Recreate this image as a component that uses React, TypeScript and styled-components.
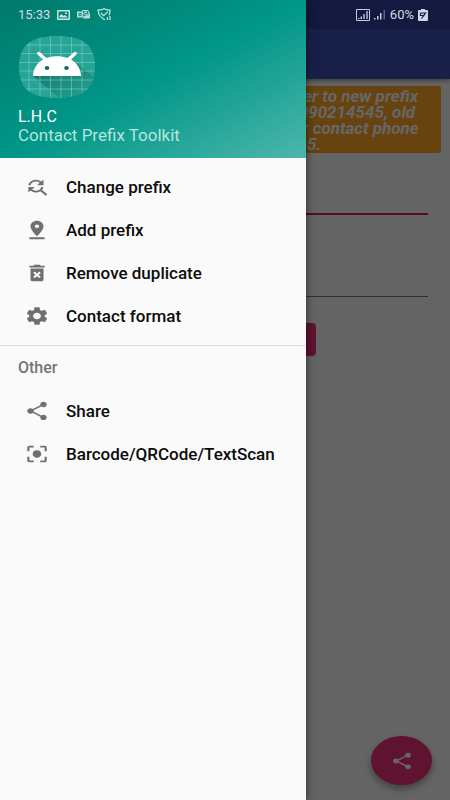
import React from "react";
import styled, { createGlobalStyle } from "styled-components";
import {
  MdCenterFocusStrong,
  MdDeleteForever,
  MdFindReplace,
  MdPinDrop,
  MdSettings,
  MdShare,
} from "react-icons/md";

const GlobalStyle = createGlobalStyle`
  *, *::before, *::after { box-sizing: border-box; }
  body {
    margin: 0;
    background: #fafafa;
    font-family: Roboto, "Liberation Sans", sans-serif;
  }
`;

const Screen = styled.div`
  position: relative;
  min-height: 100vh;
  overflow: hidden;
`;

const AppBar = styled.header`
  height: 79px;
  padding-top: 29px;
  background: linear-gradient(#303f9f 29px, #3f51b5 29px);
  box-shadow: 0 2px 4px rgba(0, 0, 0, 0.35);
`;

const Content = styled.main`
  display: flex;
  flex-direction: column;
  padding: 7px 9px;
`;

const Banner = styled.p`
  margin: 0;
  padding: 2px 8px;
  height: 67px;
  border-radius: 2px;
  background: #ffa726;
  color: #fff;
  font-size: 17px;
  line-height: 16px;
  font-weight: 700;
  font-style: italic;
  text-align: center;
  white-space: nowrap;
`;

const BannerLine = styled.span`
  display: block;
`;

const Field = styled.input<{ $active?: boolean }>`
  display: block;
  height: 36px;
  margin: ${(p) => (p.$active ? "26px" : "46px")} 13px 0;
  border: 0;
  border-bottom: ${(p) => (p.$active ? "2px solid #d81b60" : "1px solid #777")};
  border-radius: 0;
  background: transparent;
  font: inherit;
  outline: none;
`;

const SubmitButton = styled.button`
  align-self: center;
  width: 182px;
  height: 33px;
  margin-top: 26px;
  border: 0;
  border-radius: 4px;
  background: #ec3078;
`;

const Fab = styled.button`
  position: absolute;
  right: 18px;
  bottom: 15px;
  width: 61px;
  height: 49px;
  padding: 0;
  display: grid;
  place-items: center;
  border: 0;
  border-radius: 50%;
  background: #ec3078;
  color: #fff;
  box-shadow: 0 4px 7px rgba(0, 0, 0, 0.35);

  svg {
    width: 24px;
    height: 20px;
  }
`;

const Scrim = styled.div`
  position: absolute;
  inset: 0;
  background: rgba(0, 0, 0, 0.6);
`;

const Drawer = styled.aside`
  position: absolute;
  top: 0;
  bottom: 0;
  left: 0;
  width: 68%;
  background: #fafafa;
  box-shadow: 0 0 8px rgba(0, 0, 0, 0.6);
`;

const DrawerHeader = styled.div`
  display: flex;
  flex-direction: column;
  height: 158px;
  padding: 36px 18px 0;
  background: linear-gradient(to bottom right, #00796b, #009688 50%, #4db6ac);
  color: #fff;
`;

const Logo = styled.svg`
  width: 77px;
  height: 62px;
`;

const AppOwner = styled.div`
  margin-top: 9px;
  font-size: 16px;
  line-height: 19px;
`;

const AppName = styled.div`
  font-size: 17px;
  line-height: 19px;
  color: #b3e5df;
  white-space: nowrap;
`;

const Menu = styled.ul`
  margin: 0;
  padding: 0;
  list-style: none;
`;

const MainMenu = styled(Menu)`
  padding: 7px 0 8px;
  border-bottom: 1px solid #dedede;
`;

const MenuLink = styled.a`
  display: flex;
  align-items: center;
  gap: 16px;
  height: 43px;
  padding: 0 24px;
  color: #0c0c0c;
  font-size: 17px;
  line-height: 20px;
  font-weight: 500;
  text-decoration: none;
  white-space: nowrap;

  svg {
    flex: none;
    width: 26px;
    height: 22px;
    color: #707070;
  }
`;

const GroupTitle = styled.h2`
  display: flex;
  align-items: center;
  height: 43px;
  margin: 0;
  padding: 0 18px;
  color: #757575;
  font-size: 16px;
  line-height: 20px;
  font-weight: 500;
`;

const StatusBar = styled.div`
  position: absolute;
  top: 0;
  left: 0;
  right: 0;
  display: flex;
  justify-content: space-between;
  align-items: center;
  height: 29px;
  padding: 0 22px 0 18px;
  color: #d5d9e4;
  font-size: 13px;
  line-height: 16px;
`;

const StatusGroup = styled.div`
  display: flex;
  align-items: center;
  gap: 7px;
`;

const SignalGroup = styled(StatusGroup)`
  gap: 4px;
`;

const PictureIcon = () => (
  <svg width="13" height="10" viewBox="0 0 13 10">
    <path fill="#c5e8e2" fillRule="evenodd" d="M1 0h11q1 0 1 1v8q0 1-1 1H1q-1 0-1-1V1q0-1 1-1zM1.500 1.500v7h10v-7zM2.500 7.500V6l2-2 2 2 1.500-1 2.500 2v.5zM8 2.500h2v1.500H8z" />
  </svg>
);

const MailIcon = () => (
  <svg width="13" height="11" viewBox="0 0 13 11">
    <path fill="#b5ddd6" fillRule="evenodd" d="M0 2.500h6v6H0zM3 3.800a1.700 1.700 0 1 0 .01 0zM3 4.800a.7.7 0 1 1-.01 0z" />
    <path fill="none" stroke="#b5ddd6" d="M5 1.500h6l1 2.500-3 2-3-1.500M12.500 4v5H6" />
    <path fill="#b5ddd6" d="M7 2.500h3v1.500H7zM6.500 7l2.500-.5L12 5.500V9H6.500z" />
  </svg>
);

const ShieldIcon = () => (
  <svg width="15" height="13" viewBox="0 0 15 13" fill="none" stroke="#c5e8e2" strokeWidth="1.200">
    <path d="M8 11.800C4 10 1.500 7 1 2.200 3.500 2.200 5 1.600 7 .7c2 .9 3.500 1.500 6 1.500 0 2-.3 3.500-1 5" />
    <path d="M4 5l2.600 2.600L11 3.600M10.500 9v3M13 8v4" />
  </svg>
);

const BoxedSignalIcon = () => (
  <svg width="14" height="12" viewBox="0 0 14 12">
    <path fill="none" stroke="#c7cbdc" d="M.5.5h13v11H.5z" />
    <path fill="#c7cbdc" d="M2 9h1.500v1H2zM4.500 7.500H6V10H4.500z" />
    <path fill="#8c90b0" d="M7 5h2v5H7zM10 2h2v8h-2z" />
  </svg>
);

const SignalIcon = () => (
  <svg width="12" height="11" viewBox="0 0 12 11">
    <path fill="#c7cbdc" d="M0 9h1.500v1.500H0zM3 7h1.500v3.500H3zM6 4h1.500v6.500H6z" />
    <path fill="#5e638c" d="M9.500 1H11v9.500H9.500z" />
  </svg>
);

const BatteryIcon = () => (
  <svg width="10" height="12" viewBox="0 0 10 12">
    <path fill="#d0d3e2" d="M3 0h4v1h2q1 0 1 1v9q0 1-1 1H1q-1 0-1-1V2q0-1 1-1h2z" />
    <path fill="none" stroke="#141942" strokeWidth="1.200" d="M2.500 4h5L3.500 9.500M2.500 4v2.500h4" />
  </svg>
);

const gridX = [11, 22, 32.5, 43, 53.5, 64];
const gridY = [9, 17.5, 26.5, 35, 44, 53];

const AndroidLogo = () => (
  <Logo viewBox="0 0 77 62" role="img" aria-label="Android logo">
    <defs>
      <clipPath id="logo-shape">
        <path d="M39 0C64 0 77 8 77 31S64 62 39 62 1 54 1 31 14 0 39 0z" />
      </clipPath>
      <linearGradient id="logo-shadow" x1="0" y1="0" x2="1" y2="1">
        <stop offset="0" stopColor="#0b6355" stopOpacity="0.9" />
        <stop offset="1" stopColor="#168a7b" stopOpacity="0.2" />
      </linearGradient>
    </defs>
    <g clipPath="url(#logo-shape)">
      <path fill="#26a596" d="M0 0h77v62H0z" />
      <path fill="url(#logo-shadow)" d="M15 40L42 62H77V42L58 27 62 40z" />
      <path stroke="#84cfc5" strokeOpacity="0.75" strokeWidth="0.8" d={gridX.map((x) => `M${x} 0v62`).join("") + gridY.map((y) => `M0 ${y}h77`).join("")} />
    </g>
    <path fill="#fff" d="M15 40C15 33 19 27 25 23.500L19.500 18.500a1.600 1.600 0 0 1 2.400-2.200L28.500 22C35 19.500 43 19.500 49.500 22L56 16.300a1.600 1.600 0 0 1 2.400 2.200L53 23.500C59 27 63 33 63 40z" />
    <ellipse cx="29" cy="32" rx="2.300" ry="2" fill="#166b60" />
    <ellipse cx="48.500" cy="32" rx="2.300" ry="2" fill="#166b60" />
  </Logo>
);

const mainItems = [
  { label: "Change prefix", Icon: MdFindReplace },
  { label: "Add prefix", Icon: MdPinDrop },
  { label: "Remove duplicate", Icon: MdDeleteForever },
  { label: "Contact format", Icon: MdSettings },
];

const otherItems = [
  { label: "Share", Icon: MdShare },
  { label: "Barcode/QRCode/TextScan", Icon: MdCenterFocusStrong },
];

const MenuItems = ({ items }: { items: typeof mainItems }) => (
  <>
    {items.map(({ label, Icon }) => (
      <li key={label}>
        <MenuLink href="#">
          <Icon preserveAspectRatio="none" aria-hidden="true" />
          {label}
        </MenuLink>
      </li>
    ))}
  </>
);

const bannerLines = [
  "Change all your contact phone number to new prefix",
  "Example: your contact number was 090214545, old",
  "prefix is 090, new prefix is 0790, your contact phone",
  "will become 0790214545.",
];

export default function App() {
  return (
    <Screen>
      <GlobalStyle />
      <AppBar />
      <Content>
        <Banner>
          {bannerLines.map((line) => (
            <BannerLine key={line}>{line}</BannerLine>
          ))}
        </Banner>
        <Field $active aria-label="Old prefix" />
        <Field aria-label="New prefix" />
        <SubmitButton type="button" aria-label="Change prefix" />
      </Content>
      <Fab type="button" aria-label="Share">
        <MdShare preserveAspectRatio="none" />
      </Fab>
      <Scrim />
      <Drawer>
        <DrawerHeader>
          <AndroidLogo />
          <AppOwner>L.H.C</AppOwner>
          <AppName>Contact Prefix Toolkit</AppName>
        </DrawerHeader>
        <nav>
          <MainMenu>
            <MenuItems items={mainItems} />
          </MainMenu>
          <GroupTitle>Other</GroupTitle>
          <Menu>
            <MenuItems items={otherItems} />
          </Menu>
        </nav>
      </Drawer>
      <StatusBar>
        <StatusGroup>
          <span>15:33</span>
          <PictureIcon />
          <MailIcon />
          <ShieldIcon />
        </StatusGroup>
        <SignalGroup>
          <BoxedSignalIcon />
          <SignalIcon />
          <span>60%</span>
          <BatteryIcon />
        </SignalGroup>
      </StatusBar>
    </Screen>
  );
}
